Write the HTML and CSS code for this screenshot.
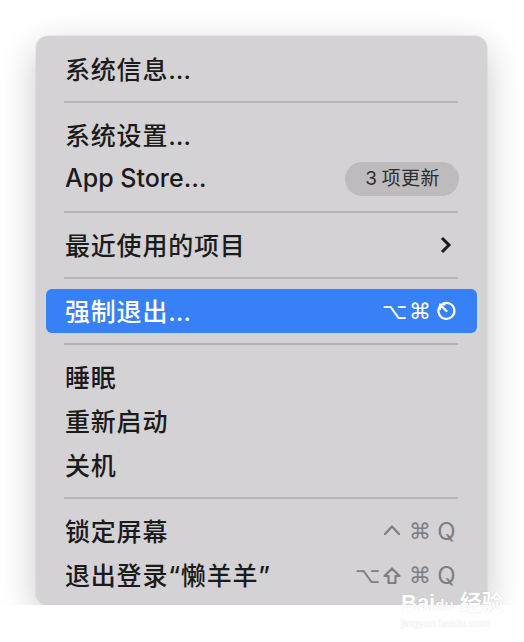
FILE: index.html
```html
<!DOCTYPE html>
<html lang="zh-CN">
<head>
  <meta charset="UTF-8" />
  <meta name="viewport" content="width=device-width, initial-scale=1.0" />
  <title>苹果菜单</title>
  <link rel="stylesheet" href="styles.css">
</head>
<body>
  <div class="menu">
    <div class="item">系统信息…</div>
    <div class="sep"></div>
    <div class="item">系统设置…</div>
    <div class="item">
      <span class="label latin">App Store…</span>
      <span class="badge">3&thinsp;项更新</span>
    </div>
    <div class="sep"></div>
    <div class="item">
      <span class="label">最近使用的项目</span>
      <svg class="chevron" viewBox="0 0 12 18"><path d="M2 2l7 7-7 7"/></svg>
    </div>
    <div class="sep"></div>
    <div class="item active">
      <span class="label">强制退出…</span>
      <span class="keys">
        <span class="key">⌥</span>
        <span class="key">⌘</span>
        <svg class="icon esc" viewBox="0 0 22 22"><path d="M7.5 3.2A8.4 8.4 0 1 1 3.2 7.5"/><path d="M11 11L4.5 4.5M4.2 9V4.2h4.8"/></svg>
      </span>
    </div>
    <div class="sep"></div>
    <div class="item">睡眠</div>
    <div class="item">重新启动</div>
    <div class="item">关机</div>
    <div class="sep"></div>
    <div class="item">
      <span class="label">锁定屏幕</span>
      <span class="keys dim">
        <svg class="icon" viewBox="0 0 20 22"><path d="M3 14l7-7.5 7 7.5"/></svg>
        <span class="key">⌘</span>
        <span class="key q">Q</span>
      </span>
    </div>
    <div class="item">
      <span class="label">退出登录“懒羊羊”</span>
      <span class="keys dim">
        <span class="key">⌥</span>
        <svg class="icon" viewBox="0 0 20 22"><path d="M10 4.5l7.5 7.5h-4v7h-7v-7h-4z"/></svg>
        <span class="key">⌘</span>
        <span class="key q">Q</span>
      </span>
    </div>
  </div>

  <div class="watermark">
    <span class="wm-logo">Bai<b>du</b> 经验</span>
    <span class="wm-url">jingyan.baidu.com</span>
  </div>
</body>
</html>
```

FILE: styles.css
```css
body {
  margin: 0;
  background: #ffffff;
  font-family: 'Inter', 'Noto Sans CJK SC', sans-serif;
  color: #1b1b1b;
}
.menu {
  margin: 36px 0 0 36px;
  width: 451px;
  box-sizing: border-box;
  padding: 11px 10px 8px;
  background: #d4d2d4;
  border-radius: 12px;
  box-shadow: 0 12px 36px rgba(0,0,0,0.22), 0 0 0 1px rgba(0,0,0,0.04);
}
.item {
  height: 44px;
  box-sizing: border-box;
  display: flex;
  align-items: center;
  justify-content: space-between;
  padding: 0 20px 3px 19px;
  border-radius: 6px;
  font-size: 25px;
  font-weight: 500;
  letter-spacing: 0.8px;
}
.item.active {
  background: #3780f5;
  color: #ffffff;
}
.label.latin {
  letter-spacing: 0;
}
.sep {
  height: 2px;
  margin: 10px 19px 10px 18px;
  background: #b5b3b5;
}
.badge {
  background: #bdbbbd;
  color: #2e2e2e;
  font-size: 19px;
  font-weight: 400;
  letter-spacing: 0.5px;
  height: 34px;
  line-height: 34px;
  padding: 0 19px 0 20px;
  border-radius: 17px;
  margin-right: -2px;
  margin-top: 3px;
}
.chevron {
  width: 12px;
  height: 18px;
  margin-right: 5px;
  margin-top: 3px;
  fill: none;
  stroke: #1b1b1b;
  stroke-width: 3;
}
.keys {
  display: flex;
  align-items: center;
  gap: 7px;
  margin-top: 3px;
  font-family: 'DejaVu Sans', sans-serif;
  font-size: 22px;
  font-weight: 400;
  letter-spacing: 0;
}
.keys.dim {
  color: #807e80;
}
.key {
  width: 20px;
  text-align: center;
}
.key.q {
  width: 21px;
  font-family: 'Inter', sans-serif;
  font-size: 24px;
}
.icon {
  width: 20px;
  height: 22px;
  fill: none;
  stroke: currentColor;
  stroke-width: 2.2;
  stroke-linecap: round;
  stroke-linejoin: round;
}
.icon.esc {
  width: 21px;
  stroke-width: 2.3;
}
.watermark {
  position: absolute;
  left: 401px;
  top: 592px;
  display: flex;
  flex-direction: column;
  align-items: flex-start;
  color: #ffffff;
  text-shadow: 0 0 1px rgba(0,0,0,0.18);
  font-family: 'Liberation Sans', 'Noto Sans CJK SC', sans-serif;
  line-height: 1;
}
.wm-logo {
  font-size: 22px;
  font-weight: bold;
}
.wm-logo b {
  font-size: 15px;
}
.wm-url {
  font-size: 11px;
  margin-top: 4px;
}
```
